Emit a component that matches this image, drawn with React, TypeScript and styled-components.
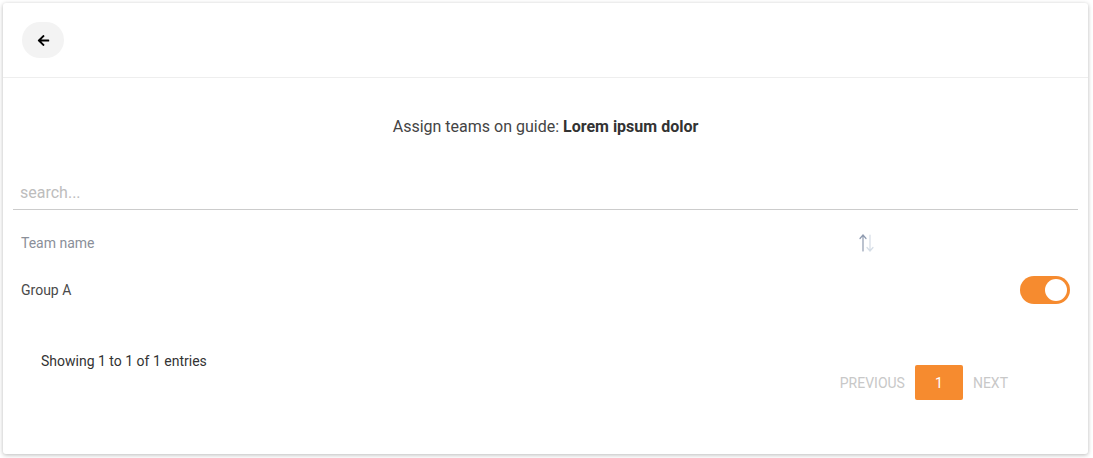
import React, { useState } from "react";
import styled, { createGlobalStyle } from "styled-components";
import { FaArrowLeft } from "react-icons/fa";

const Global = createGlobalStyle`
  html, body { margin: 0; padding: 0; background: #ffffff; }
  body { font-family: Roboto, "Liberation Sans", Arial, sans-serif; }
  * { box-sizing: border-box; }
`;

const Card = styled.div`
  margin: 3px 5px 5px 3px;
  height: 451px;
  background: #fff;
  border-radius: 3px;
  box-shadow: 0 1px 4px rgba(0, 0, 0, 0.28);
  display: flex;
  flex-direction: column;
`;

const Header = styled.div`
  height: 75px;
  padding: 19px;
  border-bottom: 1px solid #eeeeee;
  display: flex;
  align-items: flex-start;
`;

const BackButton = styled.button`
  width: 42px;
  height: 36px;
  border: none;
  border-radius: 18px;
  background: #f3f3f3;
  display: flex;
  align-items: center;
  justify-content: center;
  color: #000;
  padding: 0;
  cursor: pointer;
`;

const Body = styled.div`
  padding: 0 10px;
  display: flex;
  flex-direction: column;
`;

const Title = styled.div`
  margin-top: 39px;
  line-height: 20px;
  font-size: 16px;
  color: #444;
  text-align: center;
  b { font-weight: 700; color: #333; }
`;

const Search = styled.input`
  margin-top: 38px;
  height: 35px;
  border: none;
  border-bottom: 1px solid #cccccc;
  padding: 0 7px;
  font-family: inherit;
  font-size: 16px;
  color: #333;
  outline: none;
  &::placeholder { color: #bdbdbd; }
`;

const Table = styled.div`
  margin-top: 10px;
  display: grid;
  grid-template-columns: 871px 1fr;
`;

const Cell = styled.div<{ $h: number; $head?: boolean; $right?: boolean }>`
  height: ${(p) => p.$h}px;
  padding: 0 8px;
  display: flex;
  align-items: center;
  justify-content: ${(p) => (p.$right ? "flex-end" : "space-between")};
  font-size: 14px;
  color: ${(p) => (p.$head ? "#8a8f99" : "#4a4a4a")};
`;

const Switch = styled.button<{ $on: boolean }>`
  width: 50px;
  height: 28px;
  border-radius: 14px;
  border: none;
  padding: 0 3px;
  background: ${(p) => (p.$on ? "#f68b2f" : "#ccc")};
  display: flex;
  align-items: center;
  justify-content: ${(p) => (p.$on ? "flex-end" : "flex-start")};
  cursor: pointer;
`;

const Knob = styled.span`
  width: 22px;
  height: 22px;
  border-radius: 50%;
  background: #fff;
`;

const Footer = styled.div`
  margin-top: 37px;
  padding: 0 60px 0 28px;
  display: flex;
  justify-content: space-between;
  align-items: flex-start;
`;

const Info = styled.div`
  line-height: 20px;
  font-size: 14px;
  color: #333;
`;

const Pager = styled.div`
  margin-top: 14px;
  display: flex;
  align-items: center;
`;

const PageItem = styled.span<{ $active?: boolean }>`
  height: 35px;
  min-width: ${(p) => (p.$active ? "48px" : "0")};
  padding: 0 10px;
  display: flex;
  align-items: center;
  justify-content: center;
  font-size: 14px;
  text-transform: uppercase;
  border-radius: 2px;
  color: ${(p) => (p.$active ? "#fff" : "#c8c8c8")};
  background: ${(p) => (p.$active ? "#f68b2f" : "transparent")};
`;

const SortIcon = () => (
  <svg width="20" height="20" viewBox="0 0 20 20" style={{ marginRight: -1 }}>
    <g fill="none" strokeWidth="1.2" strokeLinecap="round">
      <path d="M6 2 V18 M3 5.5 L6 2 L9 5.5" stroke="#8f9bb0" />
      <path d="M13 2 V18 M10 14.5 L13 18 L16 14.5" stroke="#d5dde6" />
    </g>
  </svg>
);

export default function App() {
  const [on, setOn] = useState(true);
  return (
    <>
      <Global />
      <Card>
        <Header>
          <BackButton aria-label="back">
            <FaArrowLeft size={13} />
          </BackButton>
        </Header>
        <Body>
          <Title>
            Assign teams on guide: <b>Lorem ipsum dolor</b>
          </Title>
          <Search placeholder="search..." />
          <Table>
            <Cell $h={46} $head>
              <span>Team name</span>
              <SortIcon />
            </Cell>
            <Cell $h={46} $head />
            <Cell $h={48}>Group A</Cell>
            <Cell $h={48} $right>
              <Switch $on={on} onClick={() => setOn(!on)}>
                <Knob />
              </Switch>
            </Cell>
          </Table>
          <Footer>
            <Info>Showing 1 to 1 of 1 entries</Info>
            <Pager>
              <PageItem>Previous</PageItem>
              <PageItem $active>1</PageItem>
              <PageItem>Next</PageItem>
            </Pager>
          </Footer>
        </Body>
      </Card>
    </>
  );
}
